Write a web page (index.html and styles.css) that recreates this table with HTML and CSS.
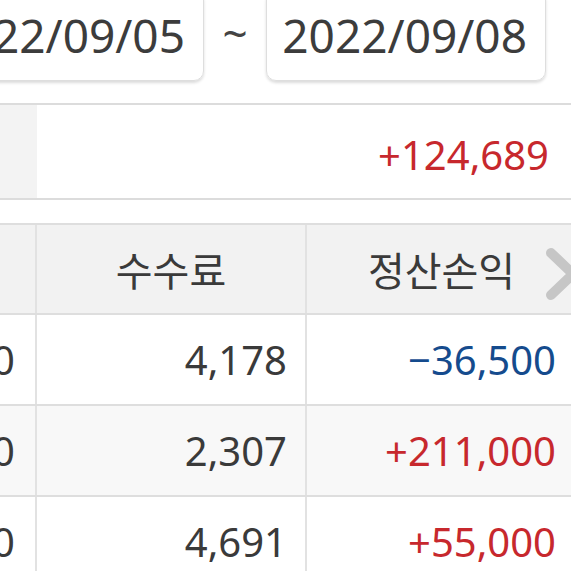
FILE: index.html
```html
<!DOCTYPE html>
<html lang="ko">
<head>
<meta charset="utf-8">
<link rel="stylesheet" href="styles.css">
</head>
<body>
<div class="page">
  <div class="dates">
    <div class="date-box">2022/09/05</div>
    <span class="tilde">~</span>
    <div class="date-box">2022/09/08</div>
  </div>

  <div class="summary">
    <div class="summary-label"></div>
    <div class="summary-value up">+124,689</div>
  </div>

  <div class="table">
    <div class="row head">
      <div class="cell c1"></div>
      <div class="cell c2 center">수수료</div>
      <div class="cell c3 center">정산손익</div>
    </div>
    <div class="row">
      <div class="cell c1">0</div>
      <div class="cell c2">4,178</div>
      <div class="cell c3 down">−36,500</div>
    </div>
    <div class="row alt">
      <div class="cell c1">0</div>
      <div class="cell c2">2,307</div>
      <div class="cell c3 up">+211,000</div>
    </div>
    <div class="row">
      <div class="cell c1">0</div>
      <div class="cell c2">4,691</div>
      <div class="cell c3 up">+55,000</div>
    </div>
    <svg class="scroll-arrow" width="34" height="56" viewBox="0 0 34 56">
      <path d="M7 6 L29 27 L7 48" fill="none" stroke="#c6c6c6" stroke-width="10" stroke-linecap="round" stroke-linejoin="round"/>
    </svg>
  </div>
</div>
</body>
</html>
```

FILE: styles.css
```css
html, body {
  margin: 0;
  padding: 0;
  background: #ffffff;
}
body {
  width: 571px;
  height: 571px;
  overflow: hidden;
  font-family: "Noto Sans", "Noto Sans CJK KR", sans-serif;
  color: #3a3a3a;
}
.page {
  width: 576px;
}
.dates {
  display: flex;
  align-items: center;
  margin-top: -10px;
  margin-left: -76px;
  height: 91px;
}
.date-box {
  box-sizing: border-box;
  width: 280px;
  height: 91px;
  border: 1px solid #dedede;
  border-radius: 10px;
  box-shadow: 0 2px 3px rgba(0, 0, 0, 0.14);
  display: flex;
  align-items: center;
  justify-content: flex-end;
  padding: 0 18px 2px 0;
  font-size: 46px;
  line-height: 1;
  color: #3c3c3c;
}
.tilde {
  width: 62px;
  text-align: center;
  font-size: 44px;
  color: #444;
  line-height: 1;
  margin-top: -6px;
}
.summary {
  margin-top: 22px;
  display: flex;
  height: 93px;
  border-top: 2px solid #dcdcdc;
  border-bottom: 2px solid #dcdcdc;
}
.summary-label {
  width: 37px;
  background: #f3f3f3;
}
.summary-value {
  flex: 1;
  display: flex;
  align-items: center;
  justify-content: flex-end;
  padding-right: 27px;
  font-size: 40px;
  padding-top: 6px;
}
.up { color: #c7282d; }
.down { color: #154b8d; }
.table {
  position: relative;
  margin-top: 23px;
  border-top: 2px solid #dedede;
}
.row {
  display: flex;
  height: 89px;
  border-bottom: 2px solid #dedede;
}
.row.head {
  height: 88px;
  background: #f2f2f2;
}
.row.alt {
  background: #f8f8f8;
}
.cell {
  box-sizing: border-box;
  display: flex;
  align-items: center;
  justify-content: flex-end;
  padding-right: 20px;
  font-size: 40px;
  color: #3a3a3a;
}
.cell.up { color: #c7282d; }
.cell.down { color: #154b8d; }
.c1 {
  width: 37px;
  border-right: 2px solid #e2e2e2;
}
.c2 {
  width: 270px;
  padding-right: 18px;
  border-right: 2px solid #e2e2e2;
}
.c3 {
  width: 269px;
}
.cell.center {
  justify-content: center;
  padding-right: 0;
  font-family: "Noto Sans CJK KR", "Noto Sans", sans-serif;
  font-size: 40px;
}
.scroll-arrow {
  position: absolute;
  top: 22px;
  left: 544px;
}
```
